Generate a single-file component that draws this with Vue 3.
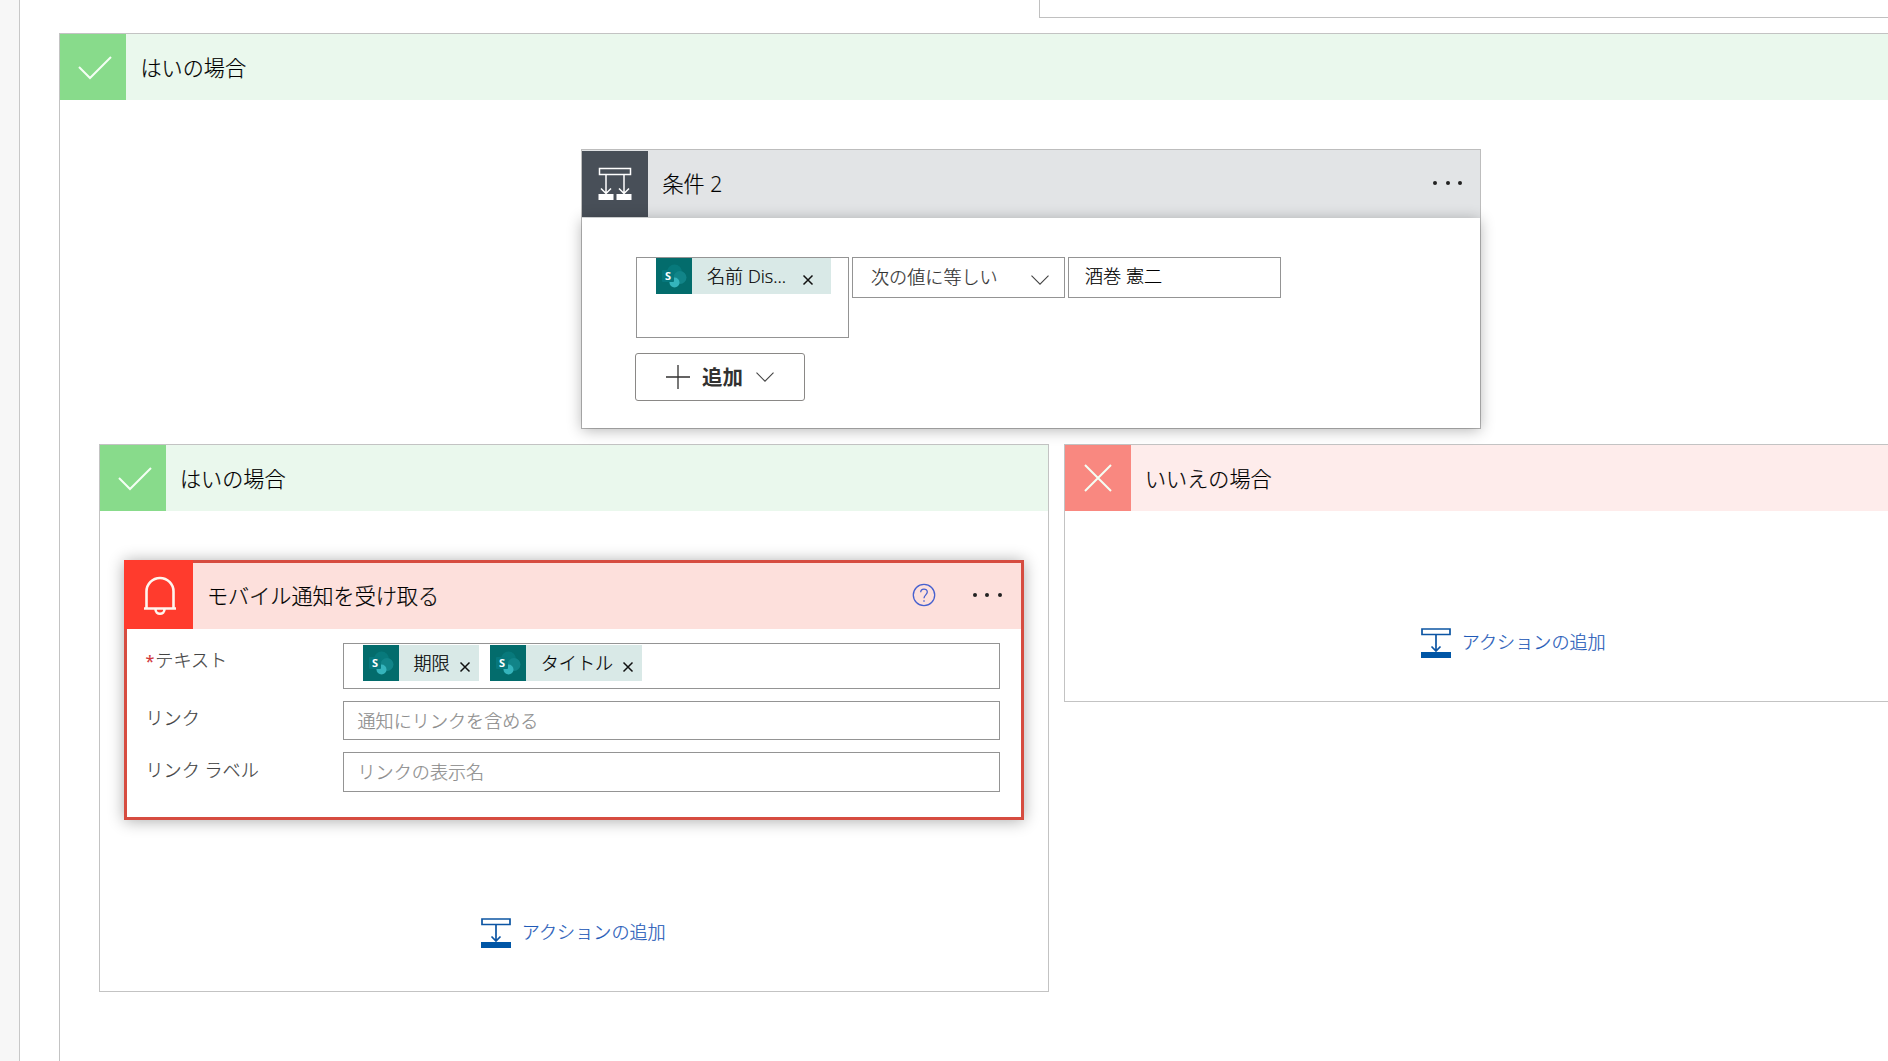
<template>
  <div class="designer">
    <div class="canvas">
      <div class="previous-card"></div>

      <section class="branch branch-outer">
        <header class="branch-header yes">
          <span class="branch-icon">
            <svg viewBox="0 0 66 66"><path d="M19 33l11 11 21-21" /></svg>
          </span>
          <span class="branch-title">はいの場合</span>
        </header>

        <div class="outer-body">
          <article class="condition">
            <header class="condition-header">
              <span class="condition-icon">
                <svg viewBox="0 0 66 66">
                  <path d="M17.5 17.5h31v6h-31z M24 24v18M19 37.5l5 5 5-5M42 24v18M37 37.5l5 5 5-5" />
                  <path class="solid" d="M16.500 43h15v6h-15zM34.500 43h15v6h-15z" />
                </svg>
              </span>
              <span class="card-title">条件 2</span>
              <span class="more"><i></i><i></i><i></i></span>
            </header>
            <div class="condition-body">
              <div class="condition-row">
                <div class="box operand">
                  <span class="token wide">
                    <svg class="sp" viewBox="0 0 36 36">
                      <circle cx="18.500" cy="14" r="7.500" fill="#07797b" />
                      <circle cx="24" cy="19.500" r="6.500" fill="#118488" />
                      <circle cx="18.500" cy="24.500" r="5" fill="#35b4bc" />
                      <rect x="6" y="12" width="12" height="12" rx="1" fill="#06777c" />
                      <text x="12" y="22" text-anchor="middle">S</text>
                    </svg>
                    <span class="token-text">名前 Dis...</span>
                    <svg class="remove" viewBox="0 0 12 12"><path d="M1.500 1.500l9 9M10.500 1.500l-9 9" /></svg>
                  </span>
                </div>
                <div class="box select">
                  <span>次の値に等しい</span>
                  <svg class="chevron" viewBox="0 0 18 10"><path d="M.5.7L9 9.200 17.500.7" /></svg>
                </div>
                <div class="box value">酒巻 憲二</div>
              </div>
              <button class="add-button" type="button">
                <svg class="plus" viewBox="0 0 24 24"><path d="M12 0v24M0 12h24" /></svg>
                <span>追加</span>
                <svg class="chevron" viewBox="0 0 18 10"><path d="M.5.7L9 9.200 17.500.7" /></svg>
              </button>
            </div>
          </article>

          <div class="branches">
            <section class="branch branch-yes">
              <header class="branch-header yes">
                <span class="branch-icon">
                  <svg viewBox="0 0 66 66"><path d="M19 33l11 11 21-21" /></svg>
                </span>
                <span class="branch-title">はいの場合</span>
              </header>

              <article class="notification">
                <header class="notification-header">
                  <span class="notification-icon">
                    <svg viewBox="0 0 66 66">
                      <path d="M19.500 45V28.500a13.500 13.500 0 0 1 27 0V45M17 45.500h32M28.500 46.300a4.500 4.500 0 0 0 9 0" />
                    </svg>
                  </span>
                  <span class="card-title">モバイル通知を受け取る</span>
                  <svg class="help" viewBox="0 0 24 24">
                    <circle cx="12" cy="12" r="10.700" />
                    <path d="M8.700 9.300c0-4.300 6.600-4.300 6.600-.2 0 2.700-3.300 2.900-3.300 6.100M12 17.200v1.600" />
                  </svg>
                  <span class="more"><i></i><i></i><i></i></span>
                </header>
                <div class="form">
                  <div class="label first"><b>*</b>テキスト</div>
                  <div class="box tokens">
                    <span v-for="t in tokens" :key="t" class="token">
                      <svg class="sp" viewBox="0 0 36 36">
                        <circle cx="18.500" cy="14" r="7.500" fill="#07797b" />
                        <circle cx="24" cy="19.500" r="6.500" fill="#118488" />
                        <circle cx="18.500" cy="24.500" r="5" fill="#35b4bc" />
                        <rect x="6" y="12" width="12" height="12" rx="1" fill="#06777c" />
                        <text x="12" y="22" text-anchor="middle">S</text>
                      </svg>
                      <span class="token-text">{{ t }}</span>
                      <svg class="remove" viewBox="0 0 12 12"><path d="M1.500 1.500l9 9M10.500 1.500l-9 9" /></svg>
                    </span>
                  </div>
                  <template v-for="f in fields" :key="f.label">
                    <div class="label">{{ f.label }}</div>
                    <div class="box placeholder">{{ f.placeholder }}</div>
                  </template>
                </div>
              </article>

              <a class="add-action">
                <svg viewBox="0 0 30 30">
                  <path d="M1 1h28v5.500H1zM15 7v16M10.500 18.500l4.500 4.500 4.500-4.500" />
                  <path class="solid" d="M0 24h30v6H0z" />
                </svg>
                <span>アクションの追加</span>
              </a>
            </section>

            <section class="branch branch-no">
              <header class="branch-header no">
                <span class="branch-icon">
                  <svg viewBox="0 0 66 66"><path d="M20 20l26 26M46 20L20 46" /></svg>
                </span>
                <span class="branch-title">いいえの場合</span>
              </header>
              <a class="add-action">
                <svg viewBox="0 0 30 30">
                  <path d="M1 1h28v5.500H1zM15 7v16M10.500 18.500l4.500 4.500 4.500-4.500" />
                  <path class="solid" d="M0 24h30v6H0z" />
                </svg>
                <span>アクションの追加</span>
              </a>
            </section>
          </div>
        </div>
      </section>
    </div>
  </div>
</template>

<script setup>
const tokens = ['期限', 'タイトル']

const fields = [
  { label: 'リンク', placeholder: '通知にリンクを含める' },
  { label: 'リンク ラベル', placeholder: 'リンクの表示名' }
]
</script>

<style>
body { overflow: hidden; }
</style>

<style scoped>
.designer {
  height: 100vh;
  overflow: hidden;
  padding-left: 19px;
  box-sizing: border-box;
  background: #f7f7f7;
  font-family: "Open Sans", "Noto Sans CJK JP", sans-serif;
  font-size: 18.1px;
  font-weight: 300;
  color: #000;
  -webkit-text-stroke: 0.2px;
}
.designer * { box-sizing: border-box; }
svg { display: block; fill: none; flex: none; }

.canvas {
  width: 2100px;
  height: 100%;
  border-left: 1px solid #c8c8c8;
  background: #fff;
}
.previous-card {
  height: 18px;
  margin-left: 1019px;
  border: solid #c0c0c0;
  border-width: 0 0 1px 1px;
}

/* Branch containers */
.branch {
  border: 1px solid #c3c3c3;
  background: #fff;
}
.branch-outer { width: 1944px; height: 1100px; margin: 15px 0 0 39px; }
.branch-header { display: flex; align-items: center; height: 66px; }
.branch-header.yes { background: #eaf8ed; }
.branch-header.no { background: #feeceb; }
.branch-icon { width: 66px; height: 66px; }
.yes .branch-icon { background: #88db8b; }
.no .branch-icon { background: #f98880; }
.branch-icon path { stroke: #f4fff4; stroke-width: 2; }
.branch-title { margin-left: 14.5px; padding-top: 1px; font-size: 21.1px; line-height: 30px; }

.outer-body {
  display: flex;
  flex-direction: column;
  align-items: center;
  padding-top: 49px;
}

/* Condition card */
.condition {
  width: 900px;
  height: 280px;
  border: 1px solid #bdbdbd;
  background: #e2e4e6;
}
.condition-header { display: flex; align-items: center; height: 68px; padding: 1px 0; }
.condition-icon { width: 66px; height: 66px; background: #484f58; }
.condition-icon path { stroke: #fff; stroke-width: 1.5; }
.condition-icon .solid { fill: #fff; stroke: none; }
.card-title { margin-left: 14.5px; font-size: 21.1px; line-height: 30px; }
.more { display: flex; gap: 8.500px; margin-left: auto; padding: 0 18px 2px 0; }
.more i { width: 4px; height: 4px; border-radius: 50%; background: #222; }
.condition-body {
  position: relative;
  height: 210px;
  padding: 39px 0 0 53px;
  background: #fff;
  box-shadow: 0 2px 14px rgba(0, 0, 0, 0.3);
}
.condition-row { display: flex; align-items: flex-start; gap: 3px; padding-left: 1px; }
.box { border: 1px solid #949494; background: #fff; }
.condition-row .box { width: 213px; height: 41px; }
.condition-row .operand { height: 81px; padding-left: 19px; }
.select {
  display: flex;
  align-items: center;
  justify-content: space-between;
  padding: 0 15px 3px 18px;
  color: #333;
}
.chevron { width: 18px; height: 10px; }
.chevron path { stroke: #444; stroke-width: 1.1; }
.select .chevron { margin-top: 7px; }
.value { padding-left: 16px; line-height: 37px; }
.add-button {
  display: flex;
  align-items: center;
  width: 170px;
  height: 48px;
  margin-top: 15px;
  padding: 0 0 0 30px;
  border: 1px solid #8a8886;
  border-radius: 3px;
  background: #fff;
  color: #323130;
  font: bold 20.5px "Open Sans", "Noto Sans CJK JP", sans-serif;
  -webkit-text-stroke: 0;
}
.add-button span { padding-bottom: 2px; }
.plus { width: 24px; height: 24px; margin-right: 12px; }
.plus path { stroke: #323130; stroke-width: 1.3; }
.add-button .chevron { margin-left: 13px; }

/* Dynamic content tokens */
.token {
  display: flex;
  align-items: center;
  height: 36px;
  padding-right: 8px;
  background: #d9e9e7;
}
.token.wide { width: 175px; padding-right: 17px; }
.sp { width: 36px; height: 36px; background: #036c6c; }
.sp text { fill: #fff; font: bold 11px "Open Sans", sans-serif; -webkit-text-stroke: 0; }
.token-text { margin: 0 9px 0 15px; line-height: 36px; white-space: nowrap; }
.remove { width: 12px; height: 12px; margin: 8px 0 0 auto; }
.remove path { stroke: #111; stroke-width: 1.5; }

/* Nested branches */
.branches { display: flex; align-items: flex-start; gap: 15px; margin-top: 15px; }
.branch-yes { width: 950px; height: 548px; }
.branch-no { width: 900px; height: 258px; }

.notification {
  width: 900px;
  height: 260px;
  margin: 49px 0 0 24px;
  border: 3px solid #d64c40;
  background: #fff;
  box-shadow: 0 1px 15px rgba(0, 0, 0, 0.33);
}
.notification-header { display: flex; align-items: center; height: 66px; background: #fde0dc; }
.notification-icon {
  width: 69px;
  height: 69px;
  margin: -3px 0 0 -3px;
  padding: 3px 0 0 3px;
  background: #ff3b2d;
}
.notification-icon path { stroke: #fff5ee; stroke-width: 2.600; }
.help { width: 24px; height: 24px; margin: 0 0 2px auto; }
.help circle { stroke: #4660cf; stroke-width: 1.3; }
.help path { stroke: #4660cf; stroke-width: 1.3; }
.notification .more { margin-left: 37px; padding-right: 19px; }

.form {
  display: grid;
  grid-template-columns: 197px 657px;
  grid-template-rows: 46px 39px 40px;
  row-gap: 12px;
  padding: 14px 0 0 19px;
}
.label { padding-top: 2px; line-height: 30px; color: #444; }
.label:nth-last-child(2) { padding-top: 3px; }
.label b { margin-right: 1px; color: #d13438; font-weight: 400; font-size: 16px; }
.tokens { display: flex; gap: 11px; padding: 1px 0 0 19px; }
.placeholder { padding-left: 14px; line-height: 38px; color: #8c8c8c; }

.add-action {
  display: flex;
  align-items: center;
  justify-content: center;
  gap: 10.5px;
  color: #1f5ab8;
}
.add-action svg { width: 30px; height: 30px; }
.add-action path { stroke: #0c55a3; stroke-width: 1.7; }
.add-action .solid { fill: #0056a6; stroke: none; }
.branch-yes .add-action { margin-top: 98px; }
.branch-no .add-action { margin-top: 117px; }
.add-action span { padding-bottom: 2px; line-height: 28px; }
</style>
